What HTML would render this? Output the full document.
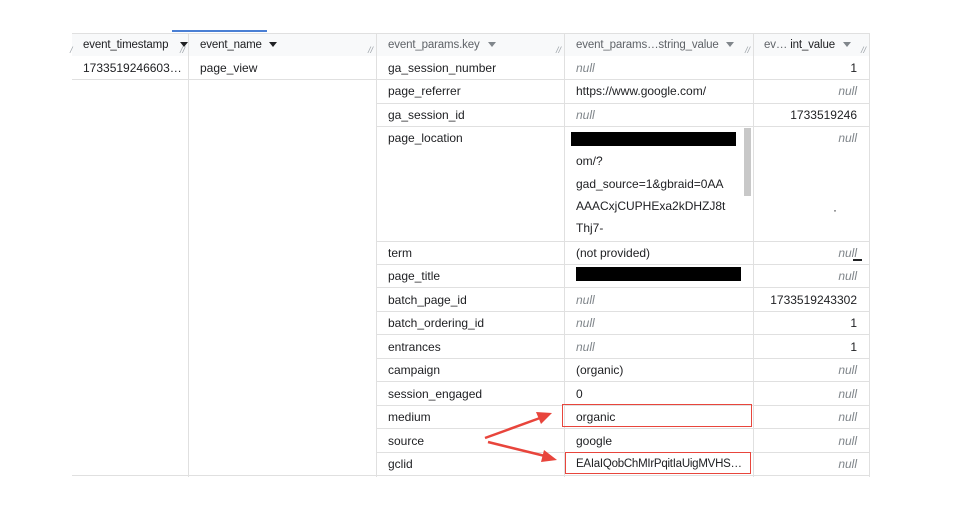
<!DOCTYPE html>
<html><head><meta charset="utf-8"><style>
body{margin:0;width:958px;height:510px;background:#fff;position:relative;overflow:hidden;font-family:"Liberation Sans",Arial,sans-serif;font-size:12px;color:#202124}
.a{position:absolute}
.vl{position:absolute;width:1px;background:#e0e0e0}
.hl{position:absolute;height:1px;background:#e0e0e0}
.t{position:absolute;white-space:nowrap;line-height:14px}
.hd{font-size:11.5px;letter-spacing:-0.15px}
.n{color:#80868b;font-style:italic}
.h{color:#5f6368}
.ar{position:absolute;width:0;height:0;border-left:4px solid transparent;border-right:4px solid transparent;border-top:5px solid #202124}
.ar2{border-top-color:#80868b}
.rs{position:absolute;font-size:9px;color:#9aa0a6;font-style:italic}
.blk{position:absolute;background:#000}
.red{position:absolute;border:1.5px solid #e8453c}
</style></head><body>
<div class="a" style="left:72px;top:33px;width:797px;height:23px;background:#f8f9fa"></div>
<div class="a" style="left:172px;top:30px;width:95px;height:2px;background:#4a7fd4"></div>
<div class="hl" style="left:72px;top:33px;width:798px"></div>
<div class="vl" style="left:188px;top:33px;height:444px"></div>
<div class="vl" style="left:376px;top:33px;height:444px"></div>
<div class="vl" style="left:564px;top:33px;height:444px"></div>
<div class="vl" style="left:753px;top:33px;height:444px"></div>
<div class="vl" style="left:869px;top:33px;height:444px"></div>
<div class="t hd" style="left:83px;top:38px">event_timestamp</div><div class="ar" style="left:180px;top:42px"></div>
<div class="t hd" style="left:200px;top:38px">event_name</div><div class="ar" style="left:269px;top:42px"></div>
<div class="t hd h" style="left:388px;top:38px">event_params.key</div><div class="ar ar2" style="left:488px;top:42px"></div>
<div class="t hd h" style="left:576px;top:38px">event_params…string_value</div><div class="ar ar2" style="left:726px;top:42px"></div>
<div class="t hd h" style="left:764px;top:38px">ev… <span style="color:#202124">int_value</span></div><div class="ar ar2" style="left:843px;top:42px"></div>
<div class="rs" style="left:180px;top:45px">//</div>
<div class="rs" style="left:368px;top:45px">//</div>
<div class="rs" style="left:556px;top:45px">//</div>
<div class="rs" style="left:745px;top:45px">//</div>
<div class="rs" style="left:861px;top:45px">//</div>
<div class="rs" style="left:70px;top:45px">/</div>
<div class="hl" style="left:72px;top:79px;width:304px"></div>
<div class="hl" style="left:72px;top:475px;width:798px"></div>
<div class="hl" style="left:376px;top:79px;width:494px"></div>
<div class="hl" style="left:376px;top:103px;width:494px"></div>
<div class="hl" style="left:376px;top:126px;width:494px"></div>
<div class="hl" style="left:376px;top:241px;width:494px"></div>
<div class="hl" style="left:376px;top:264px;width:494px"></div>
<div class="hl" style="left:376px;top:287px;width:494px"></div>
<div class="hl" style="left:376px;top:311px;width:494px"></div>
<div class="hl" style="left:376px;top:334px;width:494px"></div>
<div class="hl" style="left:376px;top:358px;width:494px"></div>
<div class="hl" style="left:376px;top:381px;width:494px"></div>
<div class="hl" style="left:376px;top:405px;width:494px"></div>
<div class="hl" style="left:376px;top:428px;width:494px"></div>
<div class="hl" style="left:376px;top:452px;width:494px"></div>
<div class="t" style="left:83px;top:61px">1733519246603…</div>
<div class="t" style="left:200px;top:61px">page_view</div>
<div class="t" style="left:388px;top:61px">ga_session_number</div>
<div class="t" style="left:388px;top:84px">page_referrer</div>
<div class="t" style="left:388px;top:108px">ga_session_id</div>
<div class="t" style="left:388px;top:131px">page_location</div>
<div class="t" style="left:388px;top:246px">term</div>
<div class="t" style="left:388px;top:269px">page_title</div>
<div class="t" style="left:388px;top:293px">batch_page_id</div>
<div class="t" style="left:388px;top:316px">batch_ordering_id</div>
<div class="t" style="left:388px;top:340px">entrances</div>
<div class="t" style="left:388px;top:363px">campaign</div>
<div class="t" style="left:388px;top:387px">session_engaged</div>
<div class="t" style="left:388px;top:410px">medium</div>
<div class="t" style="left:388px;top:434px">source</div>
<div class="t" style="left:388px;top:457px">gclid</div>
<div class="t n" style="left:576px;top:61px">null</div>
<div class="t" style="left:576px;top:84px">https://www.google.com/</div>
<div class="t n" style="left:576px;top:108px">null</div>
<div class="blk" style="left:571px;top:132px;width:165px;height:14px"></div>
<div class="t" style="left:576px;top:154px">om/?</div>
<div class="t" style="left:576px;top:177px">gad_source=1&amp;gbraid=0AA</div>
<div class="t" style="left:576px;top:199px">AAACxjCUPHExa2kDHZJ8t</div>
<div class="t" style="left:576px;top:221px">Thj7-</div>
<div class="a" style="left:744px;top:128px;width:7px;height:68px;background:#c8c8c8"></div>
<div class="t" style="left:576px;top:246px">(not provided)</div>
<div class="blk" style="left:576px;top:267px;width:165px;height:14px"></div>
<div class="t n" style="left:576px;top:293px">null</div>
<div class="t n" style="left:576px;top:316px">null</div>
<div class="t n" style="left:576px;top:340px">null</div>
<div class="t" style="left:576px;top:363px">(organic)</div>
<div class="t" style="left:576px;top:387px">0</div>
<div class="t" style="left:576px;top:410px">organic</div>
<div class="t" style="left:576px;top:434px">google</div>
<div class="t" style="left:576px;top:457px;font-size:11.5px;letter-spacing:-0.25px">EAIaIQobChMIrPqitIaUigMVHS…</div>
<div class="t" style="right:101px;top:61px">1</div>
<div class="t n" style="right:101px;top:84px">null</div>
<div class="t" style="right:101px;top:108px">1733519246</div>
<div class="t n" style="right:101px;top:131px">null</div>
<div class="t" style="left:833px;top:203px">·</div>
<div class="t n" style="right:101px;top:246px">null</div>
<div class="a" style="left:853px;top:259px;width:9px;height:1.5px;background:#202124"></div>
<div class="t n" style="right:101px;top:269px">null</div>
<div class="t" style="right:101px;top:293px">1733519243302</div>
<div class="t" style="right:101px;top:316px">1</div>
<div class="t" style="right:101px;top:340px">1</div>
<div class="t n" style="right:101px;top:363px">null</div>
<div class="t n" style="right:101px;top:387px">null</div>
<div class="t n" style="right:101px;top:410px">null</div>
<div class="t n" style="right:101px;top:434px">null</div>
<div class="t n" style="right:101px;top:457px">null</div>
<div class="red" style="left:562px;top:404px;width:188px;height:21px"></div>
<div class="red" style="left:565px;top:452px;width:184px;height:20px"></div>
<svg class="a" style="left:0;top:0" width="958" height="510">
<g stroke="#e8453c" stroke-width="2.5" fill="#e8453c">
<line x1="485" y1="438" x2="540" y2="418"/>
<polygon points="552,413 536,412 541,424" stroke="none"/>
<line x1="488" y1="442" x2="545" y2="456"/>
<polygon points="557,460 544,450 541,462" stroke="none"/>
</g></svg>
</body></html>
